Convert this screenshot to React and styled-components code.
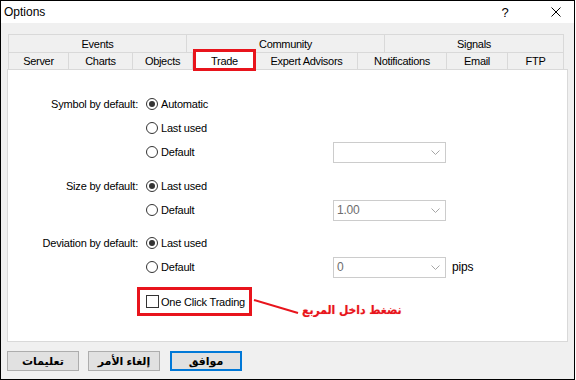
import React from "react";
import styled, { createGlobalStyle } from "styled-components";

const GlobalStyle = createGlobalStyle`
  body {
    margin: 0;
    background: #fff;
    font-family: "Liberation Sans", "DejaVu Sans", sans-serif;
    color: #000;
  }
`;

const Window = styled.div`
  width: 575px;
  height: 380px;
  box-sizing: border-box;
  border: 1px solid #000;
  background: #f0f0f0;
  display: flex;
  flex-direction: column;
`;

const TitleBar = styled.div`
  height: 22px;
  background: #fff;
  display: flex;
  align-items: center;
  padding-left: 3px;
  font-size: 12px;
`;

const TitleText = styled.span`
  flex: 1;
`;

const TitleButton = styled.span`
  width: ${(p) => p.$w}px;
  margin-right: ${(p) => p.$mr || 0}px;
  display: flex;
  justify-content: center;
  align-items: center;
  font-size: 13px;
`;

const Body = styled.div`
  flex: 1;
  padding: 11px 6px 7px 6px;
  display: flex;
  flex-direction: column;
`;

const TabStrip = styled.div`
  margin-left: 1px;
  width: 556px;
  display: flex;
  flex-direction: column;
  font-size: 11px;
  letter-spacing: -0.3px;
`;

const TabRow = styled.div`
  display: flex;
  height: ${(p) => p.$h}px;
`;

const Tab = styled.div`
  width: ${(p) => p.$w}px;
  box-sizing: border-box;
  border-top: 1px solid #d9d9d9;
  border-right: 1px solid #d9d9d9;
  border-left: ${(p) => (p.$first ? "1px solid #d9d9d9" : "none")};
  display: flex;
  justify-content: center;
  align-items: center;
  background: #f0f0f0;
`;

const ActiveTab = styled.div`
  width: ${(p) => p.$w}px;
  height: 22px;
  margin-top: -3px;
  box-sizing: border-box;
  border: 3px solid #e8141c;
  background: #fff;
  display: flex;
  justify-content: center;
  align-items: center;
  position: relative;
  z-index: 2;
  padding-top: 1px;
`;

const Panel = styled.div`
  height: 273px;
  box-sizing: border-box;
  border: 1px solid #d9d9d9;
  background: #fff;
  padding-top: 22px;
  position: relative;
  font-size: 11px;
  letter-spacing: -0.2px;
`;

const Group = styled.div`
  margin-top: ${(p) => p.$gap || 0}px;
`;

const Row = styled.div`
  display: grid;
  grid-template-columns: 138px 187px 113px auto;
  align-items: center;
  height: 24px;
`;

const Label = styled.div`
  text-align: right;
  padding-right: 8px;
`;

const Option = styled.div`
  display: flex;
  align-items: center;
`;

const Radio = styled.span`
  width: 12px;
  height: 12px;
  box-sizing: border-box;
  border: 1px solid #333;
  border-radius: 50%;
  margin-right: 3px;
  display: flex;
  justify-content: center;
  align-items: center;

  &::after {
    content: "";
    width: 6px;
    height: 6px;
    border-radius: 50%;
    background: #333;
    display: ${(p) => (p.$checked ? "block" : "none")};
  }
`;

const Select = styled.div`
  width: 113px;
  height: 21px;
  box-sizing: border-box;
  border: 1px solid #cccccc;
  display: flex;
  align-items: center;
  justify-content: space-between;
  padding: 0 5px 0 3px;
  color: #6d6d6d;
  font-size: 12px;
`;

const Pips = styled.span`
  padding-left: 6px;
  font-size: 12px;
`;

const CheckHighlight = styled.div`
  margin-left: -9px;
  height: 29px;
  box-sizing: border-box;
  border: 3px solid #e8141c;
  padding: 0 4px 0 6px;
  display: flex;
  align-items: center;
  white-space: nowrap;
`;

const CheckBox = styled.span`
  width: 13px;
  height: 13px;
  box-sizing: border-box;
  border: 1px solid #333;
  margin-right: 2px;
`;

const ArrowLine = styled.svg`
  position: absolute;
  left: 244px;
  top: 226px;
`;

const Note = styled.div`
  position: absolute;
  left: 294px;
  top: 233px;
  direction: rtl;
  color: #e8141c;
  font-family: "DejaVu Sans Condensed", "DejaVu Sans", sans-serif;
  font-weight: bold;
  font-size: 12px;
  letter-spacing: 0;
  text-shadow: 0 0 1px #f7a0a0;
`;

const ButtonRow = styled.div`
  display: flex;
  gap: 9px;
  margin-top: 9px;
`;

const Button = styled.div`
  width: 72px;
  height: 20px;
  box-sizing: border-box;
  background: #e1e1e1;
  border: ${(p) => (p.$default ? "2px solid #0078d7" : "1px solid #adadad")};
  margin-left: ${(p) => (p.$default ? 1 : 0)}px;
  display: flex;
  justify-content: center;
  align-items: center;
  direction: rtl;
  font-weight: bold;
  font-size: 11px;
`;

const Chevron = () => (
  <svg width="9" height="5" viewBox="0 0 9 5">
    <path d="M0.5 0.5 L4.5 4.5 L8.5 0.5" fill="none" stroke="#a6a6a6" strokeWidth="1" />
  </svg>
);

const upperTabs = [
  { name: "Events", w: 179 },
  { name: "Community", w: 198 },
  { name: "Signals", w: 179 },
];

const lowerTabs = [
  { name: "Server", w: 61 },
  { name: "Charts", w: 64 },
  { name: "Objects", w: 60 },
  { name: "Trade", w: 63, active: true },
  { name: "Expert Advisors", w: 102 },
  { name: "Notifications", w: 89 },
  { name: "Email", w: 61 },
  { name: "FTP", w: 56 },
];

const groups = [
  {
    label: "Symbol by default:",
    gap: 0,
    options: [
      { text: "Automatic", checked: true },
      { text: "Last used" },
      { text: "Default", select: "" },
    ],
  },
  {
    label: "Size by default:",
    gap: 10,
    options: [
      { text: "Last used", checked: true },
      { text: "Default", select: "1.00" },
    ],
  },
  {
    label: "Deviation by default:",
    gap: 9,
    options: [
      { text: "Last used", checked: true },
      { text: "Default", select: "0", pips: true },
    ],
  },
];

export default function App() {
  return (
    <>
      <GlobalStyle />
      <Window>
        <TitleBar>
          <TitleText>Options</TitleText>
          <TitleButton $w={30} $mr={18}>?</TitleButton>
          <TitleButton $w={36}>
            <svg width="10" height="10" viewBox="0 0 10 10">
              <path d="M0.5 0.5 L9.5 9.5 M9.5 0.5 L0.5 9.5" stroke="#000" strokeWidth="1" />
            </svg>
          </TitleButton>
        </TitleBar>
        <Body>
          <TabStrip>
            <TabRow $h={18}>
              {upperTabs.map((t, i) => (
                <Tab key={t.name} $w={t.w} $first={i === 0}>
                  {t.name}
                </Tab>
              ))}
            </TabRow>
            <TabRow $h={17}>
              {lowerTabs.map((t, i) =>
                t.active ? (
                  <ActiveTab key={t.name} $w={t.w}>
                    {t.name}
                  </ActiveTab>
                ) : (
                  <Tab key={t.name} $w={t.w} $first={i === 0}>
                    {t.name}
                  </Tab>
                )
              )}
            </TabRow>
          </TabStrip>
          <Panel>
            {groups.map((g) => (
              <Group key={g.label} $gap={g.gap}>
                {g.options.map((o, i) => (
                  <Row key={o.text}>
                    <Label>{i === 0 ? g.label : ""}</Label>
                    <Option>
                      <Radio $checked={o.checked} />
                      {o.text}
                    </Option>
                    {o.select !== undefined ? (
                      <Select>
                        <span>{o.select}</span>
                        <Chevron />
                      </Select>
                    ) : (
                      <span />
                    )}
                    {o.pips ? <Pips>pips</Pips> : null}
                  </Row>
                ))}
              </Group>
            ))}
            <Group $gap={8}>
              <Row>
                <Label />
                <Option>
                  <CheckHighlight>
                    <CheckBox />
                    One Click Trading
                  </CheckHighlight>
                </Option>
              </Row>
            </Group>
            <ArrowLine width="60" height="22" viewBox="0 0 60 22">
              <path d="M2 4 L46 17" stroke="#e8141c" strokeWidth="2" fill="none" />
            </ArrowLine>
            <Note>نضغط داخل المربع</Note>
          </Panel>
          <ButtonRow>
            <Button>تعليمات</Button>
            <Button>إلغاء الأمر</Button>
            <Button $default>موافق</Button>
          </ButtonRow>
        </Body>
      </Window>
    </>
  );
}
